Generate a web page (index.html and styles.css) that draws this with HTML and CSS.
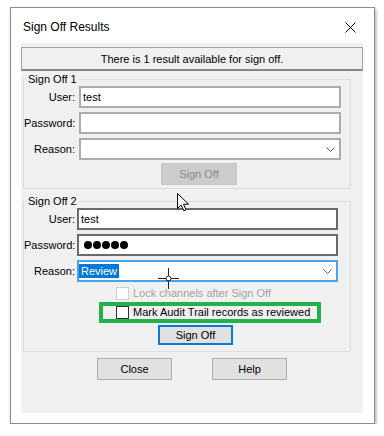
FILE: index.html
```html
<!DOCTYPE html>
<html lang="en">
<head>
	<meta charset="UTF-8">
	<title>Sign Off Results</title>
	<link rel="stylesheet" href="styles.css">
</head>
<body>
	<div class="window">
		<div class="titlebar">
			<span class="title">Sign Off Results</span>
			<svg class="close-x" width="11" height="11" viewBox="0 0 11 11">
				<path d="M0.5 0.5 L10.5 10.5 M10.5 0.5 L0.5 10.5" stroke="#000" stroke-width="1" fill="none"/>
			</svg>
		</div>
		<div class="client">
			<div class="message">There is 1 result available for sign off.</div>

			<fieldset class="group group1">
				<legend>Sign Off 1</legend>
				<div class="form">
					<label>User:</label>
					<div class="field">test</div>
					<label>Password:</label>
					<div class="field"></div>
					<label>Reason:</label>
					<div class="field combo">
						<span class="value"></span>
						<svg class="chevron" width="9" height="5" viewBox="0 0 9 5"><path d="M0.5 0.5 L4.5 4.5 L8.5 0.5" stroke="#5a5a5a" fill="none"/></svg>
					</div>
				</div>
				<button class="btn btn-disabled group1-btn" disabled>Sign Off</button>
			</fieldset>

			<fieldset class="group group2">
				<legend>Sign Off 2</legend>
				<div class="form">
					<label>User:</label>
					<div class="field">test</div>
					<label>Password:</label>
					<div class="field"><span class="dots"><i></i><i></i><i></i><i></i><i></i></span></div>
					<label>Reason:</label>
					<div class="field combo focused">
						<span class="value"><span class="selected">Review</span></span>
						<svg class="chevron" width="9" height="5" viewBox="0 0 9 5"><path d="M0.5 0.5 L4.5 4.5 L8.5 0.5" stroke="#5a5a5a" fill="none"/></svg>
					</div>
				</div>
				<div class="extras">
					<div class="check disabled"><span class="box"></span>Lock channels after Sign Off</div>
					<div class="check mark"><span class="box"></span>Mark Audit Trail records as reviewed<span class="highlight"></span></div>
					<button class="btn btn-focus">Sign Off</button>
				</div>
			</fieldset>

			<div class="bottom-buttons">
				<button class="btn">Close</button>
				<button class="btn">Help</button>
			</div>
		</div>

		<!-- mouse pointers captured in the screenshot -->
		<svg class="cursor-arrow" width="13" height="19" viewBox="0 0 13 19">
			<path d="M0.5 0.5 L0.5 15.5 L4.2 12 L6.8 17.8 L9 16.8 L6.5 11.2 L11.5 11.2 Z" fill="#fff" stroke="#000" stroke-width="1"/>
		</svg>
		<svg class="cursor-cross" width="21" height="21" viewBox="0 0 21 21">
			<path d="M10.5 0 L10.5 8 M10.5 13 L10.5 21 M0 10.5 L8 10.5 M13 10.5 L21 10.5" stroke="#222" stroke-width="1"/>
			<circle cx="10.5" cy="10.5" r="2.5" fill="none" stroke="#222" stroke-width="1"/>
		</svg>
	</div>
</body>
</html>
```

FILE: styles.css
```css
html, body {
	margin: 0;
	background: #fff;
}
body {
	font-family: "Liberation Sans", Arial, sans-serif;
	font-size: 11px;
	color: #000;
}
.window {
	position: relative;
	box-sizing: border-box;
	width: 365px;
	height: 417px;
	margin: 7px 0 0 10px;
	padding: 0 11px 10px 10px;
	background: #fff;
	border: 1px solid #8c8c8c;
	box-shadow: 1px 2px 3px rgba(0, 0, 0, 0.35);
	display: flex;
	flex-direction: column;
}
.titlebar {
	height: 35px;
	box-sizing: border-box;
	padding: 3px 7px 0 2px;
	display: flex;
	align-items: center;
	justify-content: space-between;
}
.title {
	font-size: 12px;
}
.client {
	flex: 1;
	background: #f0f0f0;
	padding-top: 4px;
}
.message {
	height: 24px;
	box-sizing: border-box;
	border: 1px solid #a3a3a3;
	border-bottom: 2px solid #858585;
	display: flex;
	align-items: center;
	justify-content: center;
}

/* group boxes */
.group {
	margin: 2px 12px 0 2px;
	padding: 0 9px 3px 0;
	border: 1px solid #dcdcdc;
	min-width: 0;
}
.group legend {
	margin-left: 2px;
	padding: 0 2px;
	line-height: 13px;
}
.group2 {
	margin-top: 6px;
	padding: 0 12px 6px 0;
}
.form {
	display: grid;
	grid-template-columns: 51px 1fr;
	column-gap: 4px;
	row-gap: 4px;
	align-items: center;
}
.group2 .form {
	column-gap: 2px;
}
.form label {
	text-align: right;
	white-space: nowrap;
}
.field {
	height: 22px;
	box-sizing: border-box;
	border: 2px solid #acacac;
	background: #fff;
	padding: 0 4px 0 2px;
	display: flex;
	align-items: center;
}
.group2 .field {
	border-color: #6a6a6a;
}
.group2 .field.focused {
	border-color: #4ba3ea;
}
.combo .value {
	flex: 1;
	display: flex;
	align-items: center;
}
.selected {
	background: #0078d7;
	color: #fff;
	padding: 1px 2px;
	margin-left: -2px;
}
.dots {
	display: flex;
	gap: 1px;
	margin-left: 3px;
}
.dots i {
	width: 8px;
	height: 8px;
	border-radius: 50%;
	background: #000;
}

/* buttons */
.btn {
	box-sizing: border-box;
	width: 75px;
	height: 22px;
	font-family: "Liberation Sans", Arial, sans-serif;
	font-size: 11px;
	color: #000;
	background: #e1e1e1;
	border: 1px solid #adadad;
	padding: 0;
}
.btn-disabled {
	width: 76px;
	background: #cccccc;
	border-color: #c4c4c4;
	color: #8a8a8a;
}
.group1-btn {
	display: block;
	margin: 3px 0 0 137px;
}
.btn-focus {
	height: 20px;
	border: 2px solid #0a7ad8;
	margin: 6px 0 0 42px;
}

/* checkboxes */
.extras {
	margin-top: 4px;
	padding-left: 92px;
	display: flex;
	flex-direction: column;
	align-items: flex-start;
}
.check {
	height: 14px;
	display: flex;
	align-items: center;
	gap: 4px;
	white-space: nowrap;
}
.check .box {
	width: 13px;
	height: 13px;
	box-sizing: border-box;
	border: 1px solid #333;
	background: #fff;
}
.check.disabled {
	color: #a2a2a2;
}
.check.disabled .box {
	border-color: #cfcfcf;
}
.check.mark {
	position: relative;
	margin-top: 5px;
}
.highlight {
	position: absolute;
	left: -17px;
	top: -3px;
	width: 222px;
	height: 21px;
	box-sizing: border-box;
	border: 4px solid #22b14c;
}

.bottom-buttons {
	margin-top: 6px;
	display: flex;
	justify-content: center;
	gap: 40px;
}

.cursor-arrow {
	position: absolute;
	left: 166px;
	top: 185px;
}
.cursor-cross {
	position: absolute;
	left: 147px;
	top: 260px;
}
```
